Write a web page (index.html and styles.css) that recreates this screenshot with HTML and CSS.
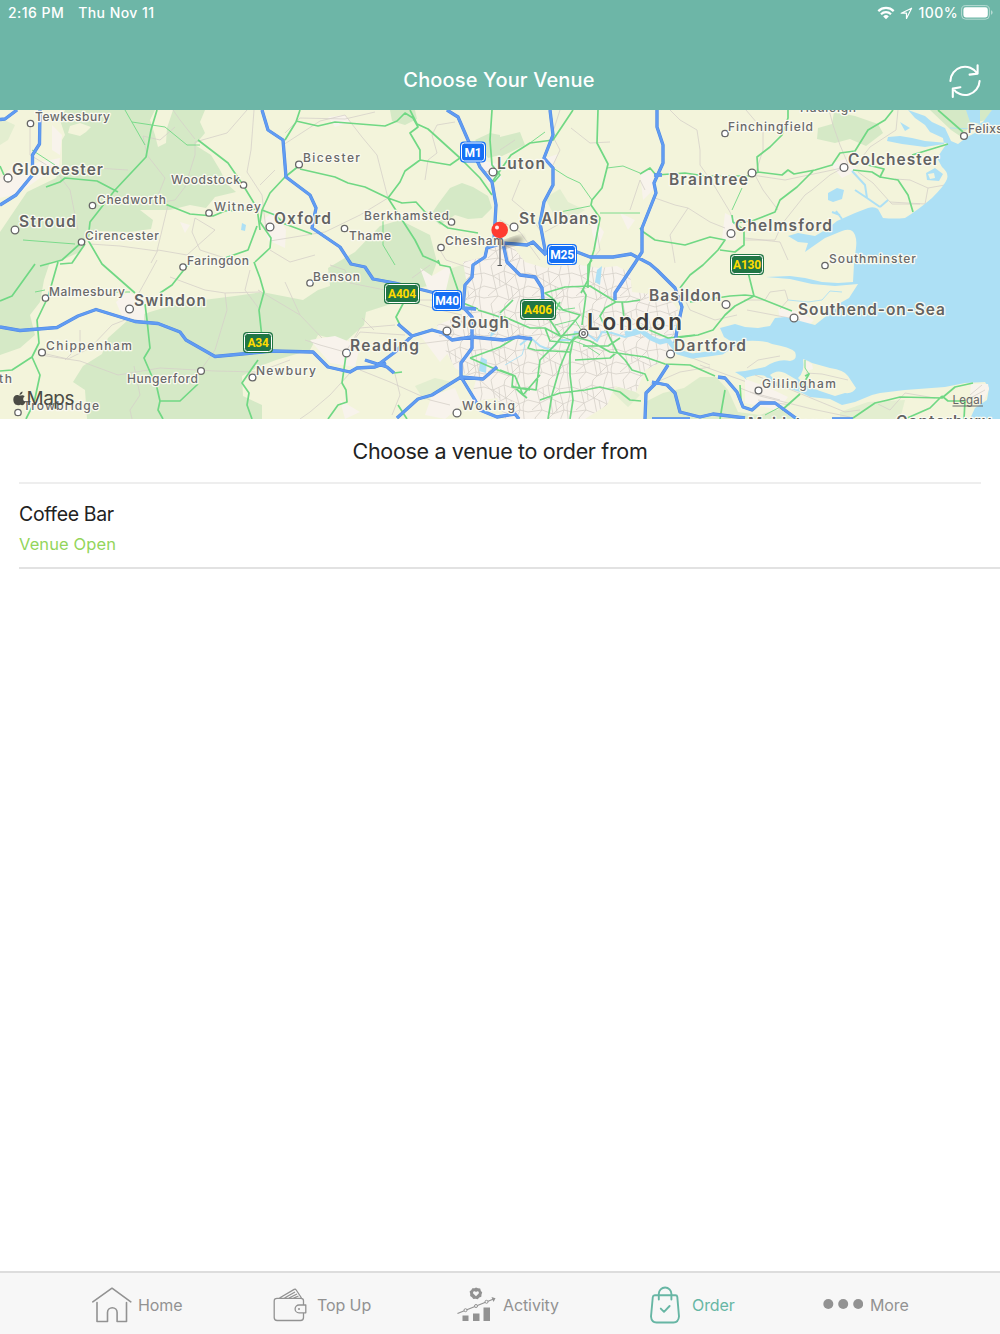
FILE: index.html
```html
<!DOCTYPE html>
<html lang="en">
<head>
    <meta charset="UTF-8">
    <meta name="viewport" content="width=device-width, initial-scale=1.0">
    <title>Choose Your Venue</title>
    <link rel="stylesheet" href="styles.css">
</head>
<body>
    <header>
        <div class="status-bar">
            <span class="time">2:16 PM</span>
            <span class="date">Thu Nov 11</span>
            <div class="status-icons">
                <svg class="wifi" width="18" height="14" viewBox="0 0 18 14" fill="none" stroke="#fff" stroke-width="2.2">
                    <path d="M1.3 5.1a11 11 0 0 1 15.4 0M4 8.2a7.2 7.2 0 0 1 10 0"/>
                    <path d="M9 13.2 6.2 10.4a4 4 0 0 1 5.6 0z" fill="#fff" stroke="none"/>
                </svg>
                <svg class="location" width="13" height="13" viewBox="0 0 13 13" fill="none" stroke="#fff" stroke-width="1.2" stroke-linejoin="round">
                    <path d="M11.6 1.2 1.2 6.2h5.3v5.3z"/>
                </svg>
                <span class="percent">100%</span>
                <svg class="battery" width="32" height="15" viewBox="0 0 32 15">
                    <rect x=".6" y=".6" width="27.8" height="13.6" rx="4" fill="none" stroke="#fff" stroke-opacity=".5"/>
                    <rect x="2.4" y="2.3" width="24.4" height="10.2" rx="2.4" fill="#fff"/>
                    <path d="M30 5.2q1.6.6 1.6 2.3T30 9.8z" fill="#fff" fill-opacity=".5"/>
                </svg>
            </div>
        </div>
        <div class="nav-bar">
            <h1>Choose Your Venue</h1>
            <button class="refresh" aria-label="Refresh">
                <svg width="34" height="36" viewBox="0 0 34 36" fill="none" stroke="#fff" stroke-width="2.1" stroke-linecap="round" stroke-linejoin="round">
                    <path d="M2.4 18A14.6 14.6 0 0 1 29.3 10.5M21.6 11.6 29.6 10.6V2.2"/>
                    <path d="M31.6 18A14.6 14.6 0 0 1 4.9 25.5M12.4 24.2 4.8 25.6V34"/>
                </svg>
            </button>
        </div>
    </header>

    <main>
        <svg class="map" width="1000" height="309" viewBox="0 110 1000 309">
            <defs>
                <pattern id="streets" width="44" height="38" patternUnits="userSpaceOnUse">
                    <path class="lane" d="M0 7 9 10 20 5 31 9 44 7M0 20 12 23 22 18 35 24 44 20M0 32 14 30 25 34 36 30 44 32M7 0 9 10 12 23 14 30 7 38M21 0 20 5 22 18 25 34 21 38M33 0 31 9 35 24 36 30 33 38M9 10 22 18 31 9M12 23 4 30M35 24 25 34M40 0 42 14 39 27 40 38M15 8 16 20 M27 20 29 32"/>
                </pattern>
                <filter id="soft"><feGaussianBlur stdDeviation="2.5"/></filter>
            </defs>

            <rect class="land" y="110" width="1000" height="309"/>

            <!-- woodland -->
            <g class="wood">
                <path d="M65 110H155L150 120 155 135 158 147 166 143 167 128 173 110H205L200 122 205 133 195 145 211 155 220 170 227 184 236 192 215 197 206 208 190 205 170 210 140 210 153 220 151 229 130 232 92 231 80 252 62 260 50 262 44 280 40 302 30 315 35 335 20 348 0 355V232L27 192 56 178 62 165 62 140 65 135 60 120Z"/>
                <path d="M128 320 150 312 180 303 235 296 262 292 303 300 318 290 330 286 328 268 355 252 380 226 400 220 430 235 437 262 428 286 398 292 394 303 366 312 364 325 345 342 318 335 310 350 276 360 258 367 242 376 243 396 262 405 262 419H87L85 390 73 382 83 366 102 354 108 338Z"/>
                <path d="M390 110H415L417 119 405 125 392 121ZM438 204 450 188 462 183 473 187 488 196 492 208 482 218 468 219 455 215 440 225 430 216Z"/>
                <path d="M475 140 490 133 500 135V155L488 158ZM500 137 520 132 525 145 500 157ZM818 128 832 124 834 112 855 116 878 124 883 133 866 146 850 139 835 143 817 139ZM930 110H1000V118L975 122 960 136 951 130Z"/>
                <path d="M645 402 663 393 684 388 700 377 716 377 728 390 738 412 760 415 780 408 800 419H645Z" opacity=".75"/>
                <path d="M470 262 485 270 470 275 460 292 440 290 447 270ZM435 378 452 382 440 395 424 400 415 386ZM610 390 625 385 640 395 628 407ZM840 412 868 402 905 400 900 419H840ZM545 198 560 189 568 202 585 210 570 219 553 213ZM580 265 600 268 598 290 585 292ZM0 118 15 125 8 140 0 145Z" opacity=".55"/>
            </g>
            <path class="land" d="M70 126 80 123 91 127 86 132 80 136 68 133Z"/>

            <!-- built-up areas -->
            <g class="urban">
                <path d="M463 262 480 258 495 240 510 243 525 262 545 268 575 264 600 268 617 266 630 273 632 292 668 296 678 310 678 345 662 362 645 370 636 392 615 386 607 405 585 419H505L497 398 470 402 476 380 455 368 440 340 437 325 462 315 468 290Z"/>
                <path d="M310 340 335 336 360 346 355 367 330 363ZM0 178 15 165 35 163 60 158 58 170 40 178 18 194 0 198ZM116 302 128 292 145 300 144 322 122 316ZM263 220 275 210 286 230 285 248 268 240ZM420 268 432 276 452 264 446 290 428 290ZM480 160 497 164 502 180 488 184ZM540 160 558 154 552 168ZM640 172 652 170 655 188 643 200ZM725 213 735 218 736 240 722 240ZM830 164 848 158 858 170 842 178ZM778 308 800 312 814 320 808 326 780 320ZM590 213 604 232 597 250 592 232ZM620 213 635 220 628 230ZM432 395 455 388 462 405 445 419 425 415ZM52 125 62 135 60 155 52 150ZM420 335 447 330 455 345 440 362ZM340 400 360 412 345 419ZM180 222 190 225 185 233ZM328 117 345 115 350 122 335 127Z"/>
            </g>

            <!-- minor roads -->
            <path d="M463 262 480 258 495 240 510 243 525 262 545 268 575 264 600 268 617 266 630 273 632 292 668 296 678 310 678 345 662 362 645 370 636 392 615 386 607 405 585 419H505L497 398 470 402 476 380 455 368 440 340 437 325 462 315 468 290Z" fill="url(#streets)"/>
            <g class="lane">
                <path d="M247 110 227 133 195 142 195 155 185 187 175 200 150 204M155 203 165 178 147 155 143 136 160 140 175 127M195 139 180 120 173 110M80 167 128 170M30 123 30 155 55 170 70 190 78 230M90 244 120 246 157 251 168 205M151 263 158 250 187 255 215 230 195 218 192 232 200 250 225 258M157 260 145 282 135 300M42 353 68 359 90 348 112 325 130 318M40 355 80 361 118 375 160 368 215 371 260 372M80 330V345L65 360M200 371 215 350 227 310 225 293 205 290 170 277M225 293 260 292M134 366 140 395 130 410 132 419"/>
                <path d="M254 110 251 150 247 172 262 195 266 230M283 145 320 121 345 115 362 137 377 155 388 198 360 215 325 232 270 241M285 133 300 118 345 119 375 112M260 185 275 170M270 250 290 262 315 255M250 270 245 290 260 310M258 290 300 315 322 338M285 282 300 315M330 265 345 270 350 283 395 292M305 340 320 345 345 352 360 332 405 335M352 342 360 328 395 325M350 373 330 395 310 412 300 419M360 370 390 382 430 400 450 405M290 360 250 375M395 374 400 395 392 415M405 300 440 310 462 315M362 318 374 330"/>
                <path d="M520 180 512 200 530 215 540 230M500 150 515 140M560 110 552 135 560 150 553 165M571 128 590 143 610 142M670 110 680 120 697 130 700 150 700 165 712 182 730 212 735 225M655 198 675 205 688 208 710 222 725 228M688 208 670 235 672 245 675 263M545 232 575 215 590 225M630 210 640 180 645 190M597 232 600 250 590 262M500 220 520 232 540 260M632 300 655 307 678 300M680 290 690 310 715 320 737 315M685 355 710 365M650 385 680 372 710 367M700 365 755 385 785 400"/>
                <path d="M746 110 763 130 763 150 755 175 763 190 778 210M752 175 785 180 842 168 848 164 840 145 833 125 829 110M848 165 830 175 812 190 805 195 782 224 775 240 745 240M858 172 873 183 890 202 925 204 928 188 910 180 895 179M928 188 945 185M898 110 896 130 870 147 860 160M745 238 780 242 788 260M890 202 892 204 920 204M744 300 765 300 770 292 785 290 788 300 780 309M747 310 800 320"/>
                <path d="M425 180 428 160 437 153 432 135 437 125 455 122M478 165 485 172 498 170M430 265 412 278M440 250 446 260 470 268M420 300 460 300M410 345 450 340M475 350 480 380 500 398"/>
            </g>

            <!-- sea and rivers -->
            <g class="water">
                <path d="M1000 110H992L983 122 975 126 975 133 967 137 958 144 951 141 945 128 932 122 925 116 908 110 915 118 925 125 930 132 943 138 944 144 925 147 902 144 887 141 888 137 900 136 912 138 925 141 947 143 937 158 942 167Q949 173 947 179 945 185 932 198 918 210 905 218 895 219 883 218L878 209Q874 206 868 208L855 213 837 221 827 229 815 236 798 233 788 236 798 242 808 243 805 252 812 247 825 238 842 231Q852 227 855 235 857 240 856 248L854 264 853 282 838 283 822 282 805 278 790 276 766 277 790 279 812 284 835 286 858 284 849 298 835 306 830 313 815 325 800 321 785 317 775 318 770 326 758 328 745 327 735 324 720 328 724 337 732 342 745 341 Q765 340 772 344 790 347 795 352 798 360 790 361 778 358 765 367L745 371 735 372 745 378Q758 373 765 376L775 386 790 389 800 392 810 397 830 399 842 405 855 402 872 395 880 393 905 390 945 387 965 383 985 382 989 388 987 400 975 408 970 419H1000Z"/>
                <path d="M828 193 837 188 844 190 842 199 833 202 828 200ZM926 173 935 168 943 174 939 181 927 180ZM900 122 910 128 905 131ZM966 110H980V124L970 122ZM741 182 742 179 745 181ZM242 223 246 225 245 231 241 230ZM481 357 487 360 486 373 479 371ZM597 270 602 266 600 285 595 282ZM492 325 498 330 490 338Z"/>
                <path class="river" d="M520 345 530 337 540 346 550 350 560 340 572 340 575 332 587 334 597 341 602 332 612 333 625 337 640 333"/>
                <path class="river" d="M852 171 865 185 867 198 880 207M867 198 855 190M880 207 888 200M840 215 832 212M842 219 836 211"/>
                <path class="river thin" d="M505 365 522 355 525 345M788 300 808 302 822 300 830 291 842 292M950 128 1000 130M760 396 740 372"/>
                <path class="thames" d="M625 334 640 330 651 338 660 342 668 340 678 352 692 356 708 354 722 352 735 343 750 334"/>
            </g>
            <path class="land" d="M803 359Q809 361 812 363L830 368Q844 370 848 376L856 388Q853 394 845 393L835 396 820 391 805 385 798 378Q805 372 803 359ZM770 375Q777 369 785 373L797 380 792 388 780 386Z"/>
            <path class="land" d="M928 174 934 173 935 178 930 179Z"/>
            <path class="urban" d="M804 360 812 364 813 369 807 371ZM745 379 765 386 788 397 778 410 745 403ZM971 384 988 384 989 389 984 400 978 405 970 395Z"/>
            <path class="lane" d="M806 373 822 374 848 380M755 375 845 412 860 410M758 400 790 405M750 392 780 400M878 404 890 410 905 393 935 398M747 368 758 360 780 356M970 395 982 385M965 401 985 390M740 388 760 396 812 409 850 417"/>

            <!-- A roads -->
            <g class="a-road">
                <path d="M157 110 151 130 146 157 115 190 90 222 88 240M46 187 60 182 65 178 97 181 118 192M165 204 190 214 213 216 225 211 257 209M198 140 228 163 243 185 257 208 260 230M257 226 248 250 225 258M82 242 62 260 40 266M85 244 72 263 60 264M88 240 102 264 135 293M35 264 12 296 0 301M58 262 48 297 37 320 39 343 32 357 40 375 34 403 26 419M32 357 12 370 0 371M190 262 172 285 160 293M145 304 147 320 150 348 144 358 157 388 160 401 158 410 163 419M160 401 180 401 198 384M0 166 4 175"/>
                <path d="M300 110 296 122 285 140M296 121 318 126 335 122 385 126 397 121 405 113 413 118 418 127 410 133 420 150 420 160 405 171 400 182 388 198M410 110 417 124 428 129 460 158 480 178 492 195M420 160 450 165 460 158M300 169 335 177 348 183 365 187 388 198 402 203 416 202 425 212 448 228 478 233M388 198 415 240 423 256 437 262 440 264M300 165 285 177 270 193 262 210 260 222 271 238 270 248 255 262M262 210 275 215 285 224 312 234M254 262 260 278 264 292 259 310 262 338M258 360 253 367 242 383 249 393 247 405 252 419M346 355 342 383 346 390 347 402 338 405 328 419M405 300 396 317 400 325M438 260 440 265 450 267 463 305M463 303 478 309M394 373 402 372M398 405 407 419"/>
                <path d="M492 110 490 140 492 165 500 175 494 182M492 182 511 155 530 143 553 140 573 110M598 110 597 143 608 164 602 188 592 200 591 205 600 218 594 250 590 263 588 280 581 293M640 174 650 168 656 175 685 173 705 176 750 176 758 172M640 228 642 231 655 240 685 245 710 237 725 240 718 250 703 265 690 275 680 288M732 215 733 222 744 230 744 245 735 252 720 250M733 223 752 221 775 212 780 200 797 187 813 171M758 172 757 157 770 147 782 135 788 118V110M758 172 782 175 788 170 794 174 815 170 832 165 840 153 855 151 868 130 885 120 893 110M853 170 872 172 880 177 884 169 868 165M880 177 898 180 908 195 913 212M912 155 948 144M938 110 963 132M745 295 754 296 748 272M754 296 735 306 725 315 713 330 698 335 675 338M754 296 792 311M745 295 730 296 690 302M640 300 627 302"/>
                <path d="M627 302 616 302 590 286 565 287 545 293 552 298 563 310 580 315 563 335 555 345 540 360 536 390 515 387M616 302 605 308 600 316 610 338 617 352M500 313 513 300M500 315 530 328 545 328 560 336 583 333M545 328 550 341 570 343 575 337 590 341 610 352 645 357 665 364 690 365 715 376M583 333 573 340 570 355 570 375 573 400 570 419M570 343 560 367 552 395 548 419M583 346 608 346 620 338M575 360 610 358 617 352 625 360 632 370 645 374 648 381M532 339 528 348 535 350 570 352M560 335 550 320 560 302M582 325 586 295 583 290M470 358 495 369 515 376 523 395 513 386M540 375 523 395 527 398M540 400 560 393 585 390 600 387 620 392 630 400 641 401M470 358 500 347 515 338M640 326 668 338 695 335M725 390 722 407 720 419M740 385 741 400M500 370 513 375 512 387 530 390M622 302 624 318M478 310 500 317M853 418 875 403 888 400 900 397 942 398 955 387 973 383M942 396 930 408 905 419M942 396 948 401 965 401 964 419M782 410 800 394M805 376 809 374 800 390M588 288 588 265 592 260"/>
                <path class="thin" d="M125 110 145 145M132 122 165 127 187 145 200 145M23 240 75 244M32 150 55 165M530 143 545 132M553 168 567 177 580 183 592 200M607 168 623 166 640 173M600 213 640 213M742 188 732 210M560 212 590 206M383 220 383 245 395 265M35 292 45 290M115 292 130 292M765 415 782 406M541 300 560 310 575 308M555 325 575 320 583 333M560 336 585 345 600 355M805 360 805 368 809 374"/>
            </g>

            <!-- motorways -->
            <g class="motorway-edge">
                <path id="m-roads" d="M0 119.500 5 119 17 110M40 110 39.500 144 32.500 155V175L16 195 0 205M0 327 20 330.500 57 327.500 78 316 96 309.500 135 321.500 158 323.500 180 332 186 340 215 356.500 247 353.500 272 351 313 352 328 367 350 372 357 368 375 367 395 352 412 336 432 330 443 333 452 340 472 337 503 340 518 337 532 339M365 360 387 367 394 373M375 367 386 363M398 324 412 336M262 110 268 130 283 140 286 177 310 195 316 208 312 228 340 247 351 264 365 267 373 279 395 283 435 293 463 308 476 309M447 110 458 117 468 140 480 167 492 182 496 205 494 240M546 255 533 242 527 245 503 243 487 248 485 257 473 265 472 277 465 285 463 307 472 317V348L461 363V377L475 400 480 410 497 417 515 414 519 419M503 243 507 262 520 275 535 277 542 288 543 300M397 418 418 399 432 395 461 377 483 379 497 367M550 110 553 135 544 158 553 168V185L544 202 540 223 546 255M546 253 577 252 590 257 613 257 631 254 650 264 657 270 675 288 682 307 677 330 675 343M668 365 657 382 646 393 645 419M657 110V127L663 145V163L654 183 656 193 642 228V252L635 263 615 293V300M654 175 662 175M652 382 667 385 675 393 680 412 700 417 713 414 745 418M652 419H690M718 377 725 378 737 392 743 407 752 410 760 403 775 403 797 419M832 419H853"/>
            </g>
            <use href="#m-roads" class="motorway"/>

            <!-- towns -->
            <g class="dot">
                <circle cx="30.500" cy="123.500" r="3.200"/><circle cx="8" cy="178" r="4"/><circle cx="15" cy="230" r="3.800"/>
                <circle cx="92.500" cy="205.500" r="3.200"/><circle cx="81.500" cy="242" r="3.200"/><circle cx="243.500" cy="185" r="3.200"/>
                <circle cx="209" cy="213" r="3.200"/><circle cx="183" cy="267" r="3.200"/><circle cx="45.500" cy="298" r="3.200"/>
                <circle cx="129.500" cy="309" r="3.900"/><circle cx="42" cy="352.500" r="3.400"/><circle cx="201" cy="371" r="3.400"/>
                <circle cx="252.500" cy="377.500" r="3.400"/><circle cx="18" cy="412.500" r="3.200"/><circle cx="299" cy="164.500" r="3.400"/>
                <circle cx="270" cy="227" r="3.900"/><circle cx="344.500" cy="228.500" r="3.200"/><circle cx="451.500" cy="222" r="3.200"/>
                <circle cx="441" cy="247.500" r="3.200"/><circle cx="310" cy="283" r="3.200"/><circle cx="346.500" cy="353" r="3.900"/>
                <circle cx="447" cy="331" r="3.900"/><circle cx="457" cy="413" r="3.900"/><circle cx="493" cy="172" r="3.900"/>
                <circle cx="514" cy="227" r="3.900"/><circle cx="725" cy="133.500" r="3.200"/><circle cx="752" cy="173" r="3.900"/>
                <circle cx="731" cy="233.500" r="3.900"/><circle cx="844" cy="167.500" r="3.900"/><circle cx="964" cy="136" r="3.400"/>
                <circle cx="825" cy="265.500" r="3.200"/><circle cx="726" cy="304.500" r="3.900"/><circle cx="670.500" cy="354" r="3.900"/>
                <circle cx="794" cy="318" r="3.900"/><circle cx="758.500" cy="390.500" r="3.400"/><circle cx="583.500" cy="333.500" r="4.300"/>
                <circle class="inner" cx="583.500" cy="333.500" r="1.800"/>
            </g>
            <g class="town">
                <text x="35" y="121" textLength="75">Tewkesbury</text>
                <text x="97" y="203.500" textLength="69">Chedworth</text>
                <text x="85" y="240" textLength="74">Cirencester</text>
                <text x="171" y="183.500" textLength="69">Woodstock</text>
                <text x="214" y="211" textLength="47">Witney</text>
                <text x="187" y="265" textLength="62">Faringdon</text>
                <text x="49" y="296" textLength="76">Malmesbury</text>
                <text x="46" y="350" textLength="86">Chippenham</text>
                <text x="127" y="382.500" textLength="71">Hungerford</text>
                <text x="256" y="375" textLength="60">Newbury</text>
                <text x="-1" y="382.500" textLength="13">th</text>
                <text x="23" y="410" textLength="76">Trowbridge</text>
                <text x="303" y="162" textLength="57">Bicester</text>
                <text x="349" y="240" textLength="42">Thame</text>
                <text x="364" y="219.500" textLength="85">Berkhamsted</text>
                <text x="445" y="245" textLength="59">Chesham</text>
                <text x="313" y="281" textLength="47">Benson</text>
                <text x="462" y="410" textLength="53">Woking</text>
                <text x="728" y="131" textLength="85">Finchingfield</text>
                <text x="800" y="112" textLength="56">Hadleigh</text>
                <text x="968" y="133" textLength="64">Felixstowe</text>
                <text x="829" y="263" textLength="87">Southminster</text>
                <text x="762" y="388" textLength="74">Gillingham</text>
            </g>
            <g class="city">
                <text x="12" y="175" textLength="91">Gloucester</text>
                <text x="19" y="227" textLength="57">Stroud</text>
                <text x="134" y="306" textLength="72">Swindon</text>
                <text x="274" y="224" textLength="57">Oxford</text>
                <text x="350" y="350.500" textLength="69">Reading</text>
                <text x="451" y="328" textLength="58">Slough</text>
                <text x="497" y="169" textLength="48">Luton</text>
                <text x="519" y="224" textLength="79">St Albans</text>
                <text x="669" y="184.500" textLength="79">Braintree</text>
                <text x="735" y="230.500" textLength="97">Chelmsford</text>
                <text x="848" y="164.500" textLength="91">Colchester</text>
                <text x="649" y="301" textLength="72">Basildon</text>
                <text x="674" y="350.500" textLength="72">Dartford</text>
                <text x="798" y="315" textLength="147">Southend-on-Sea</text>
                <text x="896" y="427" textLength="95">Canterbury</text>
                <text x="748" y="429" textLength="82">Maidstone</text>
                <text class="capital" x="587" y="329.500" textLength="95">London</text>
            </g>

            <!-- road shields -->
            <g class="shield blue">
                <rect x="460" y="141.500" width="26" height="21" rx="4"/><rect class="line" x="461.500" y="143" width="23" height="18" rx="3"/><text x="473" y="156.500">M1</text>
                <rect x="547" y="244" width="30" height="21" rx="4"/><rect class="line" x="548.500" y="245.500" width="27" height="18" rx="3"/><text x="562" y="259">M25</text>
                <rect x="432" y="290" width="30" height="21" rx="4"/><rect class="line" x="433.500" y="291.500" width="27" height="18" rx="3"/><text x="447" y="305">M40</text>
            </g>
            <g class="shield green">
                <rect x="384" y="283" width="36" height="21" rx="4"/><rect class="line" x="385.500" y="284.500" width="33" height="18" rx="3"/><text x="402" y="298">A404</text>
                <rect x="520" y="299" width="36" height="21" rx="4"/><rect class="line" x="521.500" y="300.500" width="33" height="18" rx="3"/><text x="538" y="314">A406</text>
                <rect x="730" y="254" width="34" height="21" rx="4"/><rect class="line" x="731.500" y="255.500" width="31" height="18" rx="3"/><text x="747" y="269">A130</text>
                <rect x="243" y="332" width="30" height="21" rx="4"/><rect class="line" x="244.500" y="333.500" width="27" height="18" rx="3"/><text x="258" y="347">A34</text>
            </g>

            <!-- venue pin -->
            <ellipse cx="512" cy="242" rx="12" ry="4" transform="rotate(-18 512 242)" fill="#000" opacity=".35" filter="url(#soft)"/>
            <path d="M500 236V265" stroke="#8d8d8d" stroke-width="1.600"/>
            <path d="M497.500 265.500H502" stroke="#555" stroke-width="1"/>
            <circle cx="499.700" cy="230" r="8.300" fill="#fe3b30"/>
            <circle cx="497" cy="227.500" r="2" fill="#fff" opacity=".9"/>

            <!-- map credits -->
            <path class="credit" d="M22.500 391.500q.300 2.700-3 3.500.200-2.900 3-3.500ZM13.300 399.500c0-3.700 2.900-5.400 5.700-4 1.700.5 3.400-1.200 5.700.800-2.300 1.900-1.700 4.600.6 5.700-1.200 3.400-3 3.600-5 2.700-3.500 1.500-6.900-.400-7-5.200Z"/>
            <text class="credit maps" x="26.500" y="405" textLength="48">Maps</text>
            <text class="legal" x="952.500" y="404" textLength="30">Legal</text>
            <path d="M952.500 406H983" stroke="#666" stroke-width="1"/>
        </svg>

        <h2>Choose a venue to order from</h2>

        <ul class="venues">
            <li>
                <span class="venue-name">Coffee Bar</span>
                <span class="venue-status">Venue Open</span>
            </li>
        </ul>
    </main>

    <nav class="tab-bar">
        <a class="tab">
            <svg width="40" height="36" viewBox="0 0 40 36" fill="none" stroke="#929292" stroke-width="1.600" stroke-linecap="round" stroke-linejoin="round">
                <path d="M.8 14.800 20 1.200 38.800 14.800M5 15.500V34.500H15.500V25.500a4.800 4.800 0 0 1 9.600 0V34.500H34.500V15.500"/>
            </svg>
            <span class="home">Home</span>
        </a>
        <a class="tab">
            <svg width="35" height="34" viewBox="0 0 35 34" fill="none" stroke="#929292" stroke-width="1.300" stroke-linejoin="round">
                <path d="M30.500 17V12.800q0-2.500-2.500-2.500H4q-2.800 0-2.800 2.800V29.500q0 3 3 3H27.500q3 0 3-3V25M32.800 17H26a3.900 3.900 0 0 0 0 7.800h6.800zM6.500 10 21.200 1.400q1.300-.700 2 .600L28.500 10M11.500 10 22 4M16 10 24 6M20.500 10 25.500 8"/>
                <circle cx="26" cy="21" r="1" fill="#929292" stroke="none"/>
            </svg>
            <span class="top-up">Top Up</span>
        </a>
        <a class="tab">
            <svg width="39" height="35" viewBox="0 0 39 35" fill="#929292">
                <path d="M19 .5 21 1.200 23.200 1.600 23.800 3.700 25.200 5.400 24.500 7.500 24.300 9.700 22.300 10.600 20.700 12.200 18.500 11.800 16.300 12 15 10.200 13.200 8.900 13.200 6.700 12.600 4.500 14.300 3.100 15.400 1.200 17.600 1.300Z"/>
                <path d="M19 9.300 16 6.300q-.300-2.200 1.600-2 .900 0 1.400 1 .6-1 1.500-1 1.800 0 1.400 2Z" fill="#f7f7f7"/>
                <path d="M.5 26.500 36 12.200" fill="none" stroke="#929292" stroke-width="1.200"/>
                <path d="M34.500 10 38.500 11.200 36.500 15Z"/>
                <g fill="#f7f7f7" stroke="#929292"><circle cx="8.500" cy="23.200" r="1.500"/><circle cx="19" cy="19" r="1.500"/><circle cx="29.500" cy="14.800" r="1.500"/></g>
                <path d="M5.500 28.500H11.500V34H5.500ZM16 26.500H22.500V34H16ZM26.500 20.500H33V34H26.500Z"/>
            </svg>
            <span class="activity">Activity</span>
        </a>
        <a class="tab active">
            <svg width="30" height="38" viewBox="0 0 30 38" fill="none" stroke="#67b6a4" stroke-width="1.900" stroke-linecap="round" stroke-linejoin="round">
                <path d="M4.800 9.300H25.500q1.600 0 1.800 1.600L29 30.500q-.600 6-5.500 6H6.500q-5 0-5.500-6L2.800 11q.200-1.700 2-1.700ZM8.800 13.500V7.800a6.300 6.300 0 0 1 12.600 0V13.500M10.800 22.600 14 25.800 19.600 20"/>
            </svg>
            <span class="order">Order</span>
        </a>
        <a class="tab">
            <svg width="40" height="12" viewBox="0 0 40 12" fill="#929292">
                <circle cx="5.300" cy="5" r="5"/><circle cx="20.200" cy="5" r="5"/><circle cx="35.200" cy="5" r="5"/>
            </svg>
            <span class="more">More</span>
        </a>
    </nav>
</body>
</html>
```
FILE: styles.css
```css
* {
    box-sizing: border-box;
}

body {
    font-family: Inter, "Liberation Sans", sans-serif;
    margin: 0;
    height: 1334px;
    display: flex;
    flex-direction: column;
    background-color: #ffffff;
    color: #222222;
}

header {
    background: #6db6a7;
    color: #ffffff;
    height: 110px;
}

.status-bar {
    display: flex;
    align-items: center;
    height: 25px;
    padding: 0 7px 0 8px;
    font-size: 14px;
    font-weight: 500;
    letter-spacing: 0.45px;
}

.date {
    margin-left: 14px;
}

.status-icons {
    display: flex;
    align-items: center;
    margin-left: auto;
}

.location {
    margin: 1px 5px 0 5px;
}

.battery {
    margin-left: 3px;
}

.nav-bar {
    position: relative;
    height: 85px;
    padding-top: 43px;
}

h1 {
    margin: 0;
    font-size: 20px;
    line-height: 25px;
    font-weight: 500;
    letter-spacing: 0.15px;
    text-align: center;
    padding-right: 2px;
}

.refresh {
    position: absolute;
    right: 18px;
    top: 38px;
    padding: 0;
    border: none;
    background: none;
    height: 36px;
}

main {
    flex: 1;
}

.map {
    display: block;
    background: #f3f4db;
}

.land {
    fill: #f3f4db;
}

.wood {
    fill: #d5e9c6;
}

.urban {
    fill: #f8f3ec;
}

.water {
    fill: #ade0f5;
}

.river {
    fill: none;
    stroke: #ade0f5;
    stroke-width: 2;
}

.thames {
    fill: none;
    stroke: #ade0f5;
    stroke-width: 5;
    stroke-linejoin: round;
}

.lane {
    fill: none;
    stroke: #d5d0c9;
    stroke-width: 0.8;
}

.a-road {
    fill: none;
    stroke: #70d884;
    stroke-width: 1.7;
    stroke-linejoin: round;
}

.thin {
    stroke-width: 0.9;
}

.motorway-edge {
    fill: none;
    stroke: #5089e2;
    stroke-width: 3.3;
    stroke-linejoin: round;
}

.motorway {
    fill: none;
    stroke: #609cf3;
    stroke-width: 2.3;
}

.dot {
    fill: #ffffff;
    stroke: #666666;
    stroke-width: 1.3;
}

.town,
.city {
    fill: #69696a;
    stroke: #fafaf0;
    stroke-width: 2.5px;
    stroke-linejoin: round;
    paint-order: stroke;
}

.town {
    font-size: 12px;
    font-weight: 500;
}

.city {
    font-size: 15.5px;
    font-weight: 600;
    fill: #636363;
}

.capital {
    font-size: 22.5px;
    fill: #3e3e3e;
}

.shield text {
    font-family: "Liberation Sans Narrow", Roboto, sans-serif;
    font-size: 12px;
    font-weight: 700;
    text-anchor: middle;
    letter-spacing: -0.2px;
}

.shield .line {
    fill: none;
    stroke: #ffffff;
    stroke-width: 1;
}

.blue {
    fill: #1570f5;
}

.blue text {
    fill: #ffffff;
}

.green {
    fill: #217645;
}

.green text {
    fill: #ffdc00;
}

.credit {
    fill: #4b4b45;
}

.maps {
    font-size: 19px;
    font-weight: 400;
}

.legal {
    font-size: 11.5px;
    fill: #666666;
}

h2 {
    margin: 0 19px;
    height: 65px;
    padding-bottom: 1px;
    border-bottom: 2px solid #eeeeee;
    font-size: 21.5px;
    line-height: 64px;
    font-weight: 400;
    letter-spacing: -0.33px;
    text-align: center;
}

.venues {
    list-style: none;
    margin: 0 0 0 19px;
    padding: 0;
}

.venues li {
    height: 85px;
    padding-top: 17px;
    border-bottom: 2px solid #e2e2e2;
}

.venue-name,
.venue-status {
    display: block;
}

.venue-name {
    font-size: 19.5px;
    line-height: 26px;
    letter-spacing: -0.35px;
}

.venue-status {
    margin-top: 5px;
    font-size: 16.5px;
    line-height: 24px;
    letter-spacing: 0.1px;
    color: #93d55b;
}

.tab-bar {
    display: grid;
    grid-template-columns: 181px 184px 193px 173px auto;
    height: 63px;
    padding-left: 92px;
    padding-top: 2px;
    border-top: 2px solid #dddddd;
    background: #f7f7f7;
    color: #929292;
    font-size: 16px;
    letter-spacing: -0.1px;
}

.tab {
    display: flex;
    align-items: center;
    gap: 7px;
}

.tab .home {
    margin-left: -1px;
}

.tab .top-up {
    margin-left: 2px;
}

.tab .order {
    margin-left: 5px;
}

.active {
    color: #67b6a4;
}
```
